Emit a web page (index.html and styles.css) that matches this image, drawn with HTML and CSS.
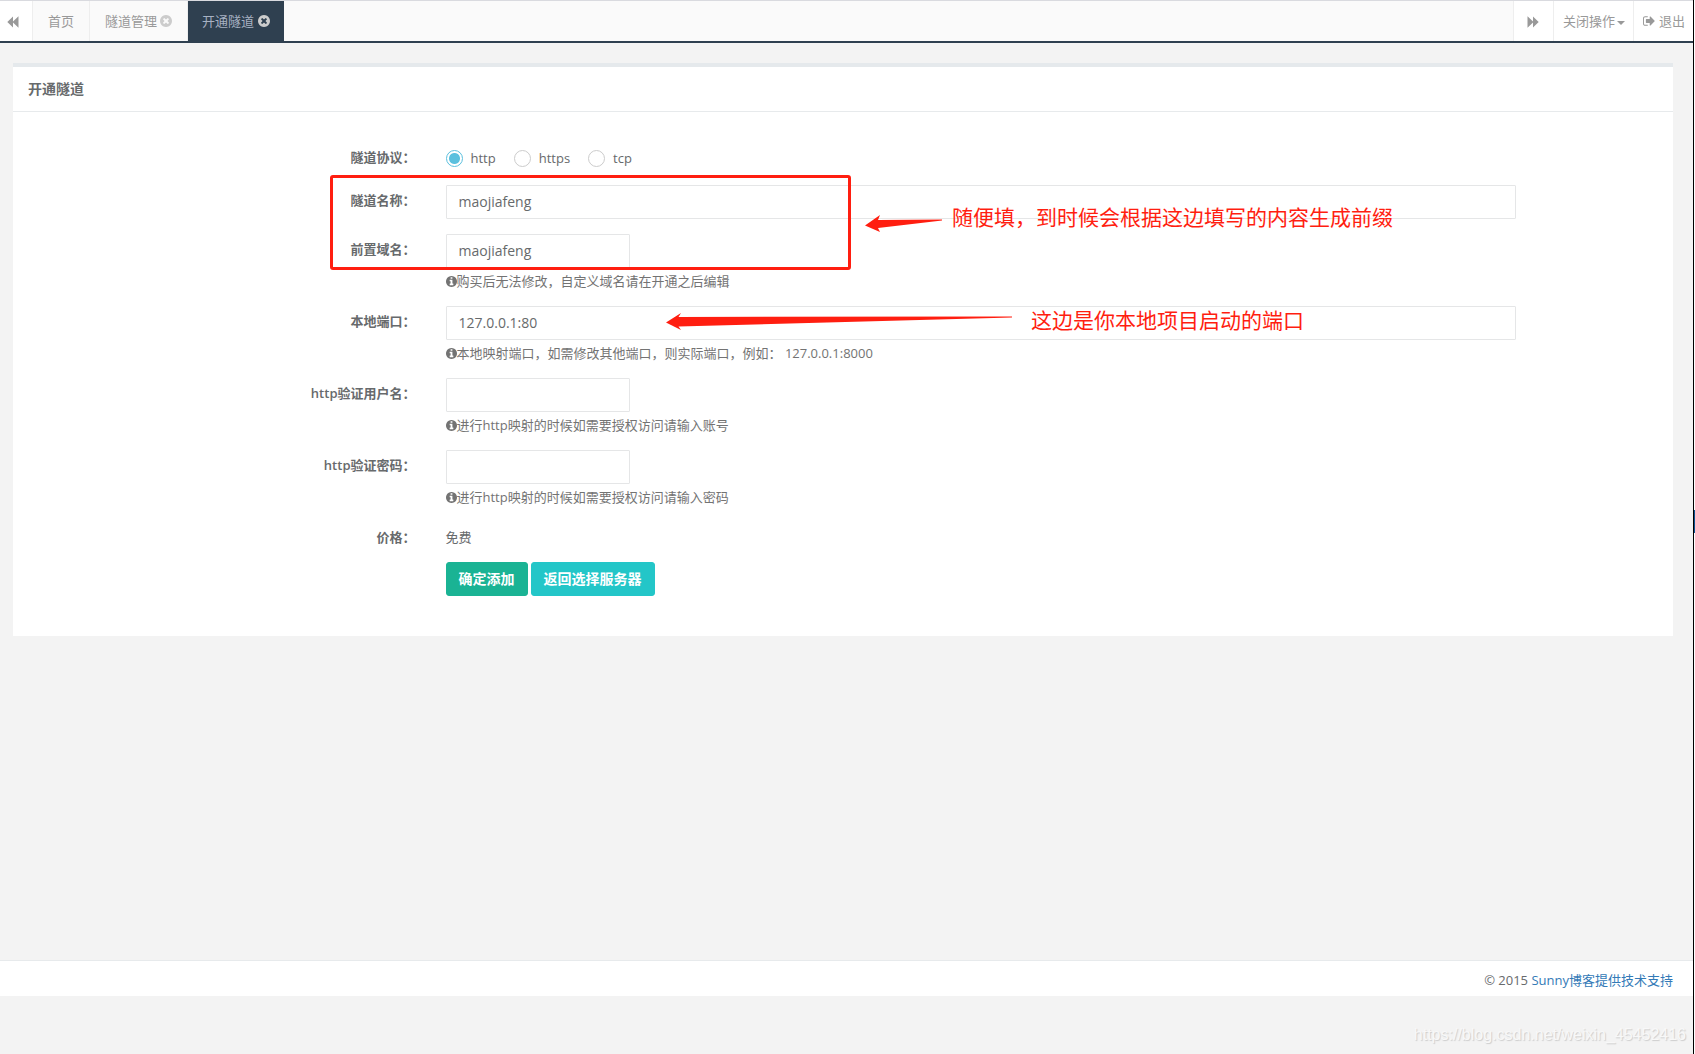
FILE: index.html
```html
<!DOCTYPE html>
<html lang="zh-CN">
<head>
<meta charset="utf-8">
<title>开通隧道</title>
<link rel="stylesheet" href="styles.css">
</head>
<body>
<svg class="sprite" aria-hidden="true">
  <symbol id="close" viewBox="128 128 1536 1536"><path d="M1277 1122q0-26-19-45l-181-181 181-181q19-19 19-45 0-27-19-46l-90-90q-19-19-46-19-26 0-45 19l-181 181-181-181q-19-19-45-19-27 0-46 19l-90 90q-19 19-19 46 0 26 19 45l181 181-181 181q-19 19-19 45 0 27 19 46l90 90q19 19 46 19 26 0 45-19l181-181 181 181q19 19 45 19 27 0 46-19l90-90q19-19 19-46zm387-226q0 209-103 385.5t-279.5 279.5-385.5 103-385.5-103-279.5-279.5-103-385.5 103-385.5 279.5-279.5 385.5-103 385.5 103 279.5 279.5 103 385.5z"/></symbol>
  <symbol id="info" viewBox="128 128 1536 1536"><path d="M1152 1376v-160q0-14-9-23t-23-9h-96v-512q0-14-9-23t-23-9h-320q-14 0-23 9t-9 23v160q0 14 9 23t23 9h96v320h-96q-14 0-23 9t-9 23v160q0 14 9 23t23 9h448q14 0 23-9t9-23zm-128-896v-160q0-14-9-23t-23-9h-192q-14 0-23 9t-9 23v160q0 14 9 23t23 9h192q14 0 23-9t9-23zm640 416q0 209-103 385.5t-279.5 279.5-385.5 103-385.5-103-279.5-279.5-103-385.5 103-385.5 279.5-279.5 385.5-103 385.5 103 279.5 279.5 103 385.5z"/></symbol>
  <symbol id="exit" viewBox="0 256 1600 1280"><path d="M640 1440q0 4 1 20t.5 26.5-3 23.5-10 19.5-20.5 6.5h-320q-119 0-203.5-84.5t-84.5-203.5v-704q0-119 84.5-203.5t203.5-84.5h320q13 0 22.5 9.5t9.5 22.5q0 4 1 20t.5 26.5-3 23.5-10 19.5-20.5 6.5h-320q-66 0-113 47t-47 113v704q0 66 47 113t113 47h312l11.5 1 11.5 3 8 5.5 7 9 2 13.5zm928-544q0 26-19 45l-544 544q-19 19-45 19t-45-19-19-45v-288h-448q-26 0-45-19t-19-45v-384q0-26 19-45t45-19h448v-288q0-26 19-45t45-19 45 19l544 544q19 19 19 45z"/></symbol>
</svg>
<div class="app">
  <nav class="tabbar">
    <button class="scroll scroll-left" type="button" aria-label="向左"><svg width="12" height="12" viewBox="0 0 12 12"><path d="M6 .5v5L11.500.3v11.400L6 6.500v5L.3 6z"/></svg></button>
    <div class="tabs">
      <a class="tab" href="#home">首页</a>
      <a class="tab" href="#list">隧道管理<svg class="close" width="12" height="12"><use href="#close"/></svg></a>
      <a class="tab active" href="#open">开通隧道<svg class="close" width="12" height="12"><use href="#close"/></svg></a>
    </div>
    <button class="scroll scroll-right" type="button" aria-label="向右"><svg width="12" height="12" viewBox="0 0 12 12"><path d="M6 .5v5L.5.3v11.400L6 6.500v5L11.700 6z"/></svg></button>
    <button class="tool" type="button">关闭操作<span class="caret"></span></button>
    <a class="tool" href="#logout"><svg class="exit" width="12" height="10"><use href="#exit"/></svg>退出</a>
  </nav>

  <main class="content">
    <section class="panel">
      <h5 class="panel-title">开通隧道</h5>
      <form class="panel-body">
        <div class="group" role="radiogroup" aria-labelledby="protocol">
          <span class="label" id="protocol">隧道协议：</span>
          <div class="field radios">
            <label class="radio"><input type="radio" name="protocol" checked>http</label>
            <label class="radio"><input type="radio" name="protocol">https</label>
            <label class="radio"><input type="radio" name="protocol">tcp</label>
          </div>
        </div>
        <div class="group">
          <label class="label" for="name">隧道名称：</label>
          <div class="field"><input class="input" id="name" type="text" value="maojiafeng"></div>
        </div>
        <div class="group">
          <label class="label" for="domain">前置域名：</label>
          <div class="field">
            <input class="input short" id="domain" type="text" value="maojiafeng">
            <p class="help"><svg width="11" height="11"><use href="#info"/></svg>购买后无法修改，自定义域名请在开通之后编辑</p>
          </div>
        </div>
        <div class="group">
          <label class="label" for="port">本地端口：</label>
          <div class="field">
            <input class="input" id="port" type="text" value="127.0.0.1:80">
            <p class="help"><svg width="11" height="11"><use href="#info"/></svg>本地映射端口，如需修改其他端口，则实际端口，例如： 127.0.0.1:8000</p>
          </div>
        </div>
        <div class="group">
          <label class="label" for="user">http验证用户名：</label>
          <div class="field">
            <input class="input short" id="user" type="text">
            <p class="help"><svg width="11" height="11"><use href="#info"/></svg>进行http映射的时候如需要授权访问请输入账号</p>
          </div>
        </div>
        <div class="group">
          <label class="label" for="pass">http验证密码：</label>
          <div class="field">
            <input class="input short" id="pass" type="text">
            <p class="help"><svg width="11" height="11"><use href="#info"/></svg>进行http映射的时候如需要授权访问请输入密码</p>
          </div>
        </div>
        <div class="group">
          <span class="label">价格：</span>
          <div class="field static">免费</div>
        </div>
        <div class="group">
          <div class="field actions">
            <button class="btn primary" type="submit">确定添加</button>
            <button class="btn info" type="button">返回选择服务器</button>
          </div>
        </div>
      </form>
    </section>
  </main>

  <footer class="footer">© 2015 <a href="#sunny">Sunny博客提供技术支持</a></footer>
</div>
<div class="edge"><div class="edge-mark"></div></div>

<div class="mark mark-box"></div>
<svg class="mark arrow-name" width="80" height="20" viewBox="0 0 80 20"><path d="M0 10.500L15 0L13 5L77 4.500V5.500L13 13L15 17z"/></svg>
<p class="mark note note-name">随便填，到时候会根据这边填写的内容生成前缀</p>
<svg class="mark arrow-port" width="350" height="20" viewBox="0 0 350 20"><path d="M0 9.500L15 0L12.500 4L346 3.500V4.500L12.500 13.500L15 17z"/></svg>
<p class="mark note note-port">这边是你本地项目启动的端口</p>
<p class="watermark">https://blog.csdn.net/weixin_45452416</p>
</body>
</html>
```
FILE: styles.css
```css
* { box-sizing: border-box; }

body {
  position: relative;
  display: flex;
  min-height: 100vh;
  margin: 0;
  background: #f3f3f3;
  color: #676a6c;
  font: 13px/18px "Open Sans", "Noto Sans CJK SC", sans-serif;
}

a { color: #337ab7; text-decoration: none; }
button, input { margin: 0; font: inherit; color: inherit; }
svg { fill: currentColor; flex: none; }
.sprite { position: absolute; width: 0; height: 0; }

.app {
  flex: 1;
  min-width: 0;
  display: flex;
  flex-direction: column;
}

/* Tab bar */
.tabbar {
  display: flex;
  height: 43px;
  border-top: 1px solid #d9dadf;
  border-bottom: 2px solid #2f4050;
  background: #fafafa;
  color: #999;
}
.tabs { flex: 1; display: flex; }
.tab {
  display: flex;
  align-items: center;
  padding: 0 15px 1px;
  border-right: 1px solid #eee;
  color: #999;
}
.tab .close { margin-left: 3px; color: #ccc; }
.tab.active {
  padding: 0 14px 1px;
  border: 0;
  background: #2f4050;
  color: #a7b1c2;
}
.tab.active .close { margin-left: 4px; }
.scroll, .tool {
  display: flex;
  align-items: center;
  border: 0;
  background: #fff;
  color: #999;
}
.scroll { justify-content: center; padding: 2px 0 0; }
.scroll-left { width: 33px; padding-right: 7px; border-right: 1px solid #eee; }
.scroll-right { width: 40px; border-left: 1px solid #eee; }
.tool { padding: 0 8px 0 9px; border-left: 1px solid #eee; }
.caret {
  margin: 4px 0 0 2px;
  border: 4px solid transparent;
  border-top-color: #999;
  border-bottom: 0;
}
.exit { margin-right: 4px; }

/* Panel */
.content { flex: 1; padding: 20px 20px 40px 13px; }
.panel { border-top: 4px solid #e5e9ec; background: #fff; }
.panel-title {
  margin: 0;
  padding: 13px 15px;
  border-bottom: 1px solid #e7eaec;
  font-size: 14px;
  line-height: 18px;
  font-weight: 600;
}
.panel-body { padding: 30px 5px 25px; }
.group { display: flex; margin-bottom: 15px; }
.label {
  flex: 0 0 25%;
  padding: 6px 15px 0;
  text-align: right;
  font-weight: 600;
}
.field { flex: 0 0 66.6667%; padding: 0 15px; }
.radios { display: flex; gap: 18px; height: 28px; padding-top: 4px; }
.radio { display: flex; align-items: center; gap: 8px; }
.radio input {
  appearance: none;
  width: 17px;
  height: 17px;
  border: 1px solid #ccc;
  border-radius: 50%;
  background: #fff;
}
.radio input:checked {
  border-color: #5bc0de;
  background: radial-gradient(circle, #5bc0de 5px, #fff 6px);
}
.input {
  display: block;
  width: 100%;
  height: 34px;
  padding: 5px 12px 7px;
  border: 1px solid #e5e6e7;
  border-radius: 1px;
  background: #fff;
  font-size: 14px;
  line-height: 20px;
}
.input.short { width: 184px; }
.help {
  display: flex;
  align-items: center;
  margin: 4px 0 1px;
  color: #737373;
  white-space: pre;
}
.static { padding-top: 6px; padding-bottom: 1px; }
.actions { display: flex; gap: 3px; margin-left: 25%; }
.btn {
  height: 34px;
  padding: 6px 12px;
  border: 1px solid;
  border-radius: 3px;
  color: #fff;
  font-size: 14px;
  line-height: 20px;
  font-weight: 600;
}
.primary { border-color: #1ab394; background: #1ab394; }
.info { border-color: #23c6c8; background: #23c6c8; }

/* Footer */
.footer {
  margin-bottom: 58px;
  padding: 10px 20px 7px;
  border-top: 1px solid #e7eaec;
  background: #fff;
  text-align: right;
}

/* Window edge */
.edge {
  width: 2px;
  border-left: 1px solid #000;
  background: #fff;
}
.edge-mark { height: 23px; margin-top: 510px; background: #0b5394; }

/* Annotations laid over the page */
.mark { position: absolute; color: #ff1e10; pointer-events: none; }
.mark-box {
  left: 330px;
  top: 175px;
  width: 521px;
  height: 95px;
  border: 3px solid;
  border-radius: 3px;
}
.note { margin: 0; font-size: 21px; line-height: 30px; white-space: nowrap; }
.arrow-name { left: 865px; top: 215px; }
.note-name { left: 952px; top: 202px; }
.arrow-port { left: 666px; top: 313px; }
.note-port { left: 1031px; top: 305px; }
.watermark {
  position: absolute;
  right: 9px;
  bottom: 8px;
  margin: 0;
  color: #f8f8f8;
  font: 16px/22px "Liberation Sans", sans-serif;
  text-shadow: 1px 1px 1px #ccc;
}
```
